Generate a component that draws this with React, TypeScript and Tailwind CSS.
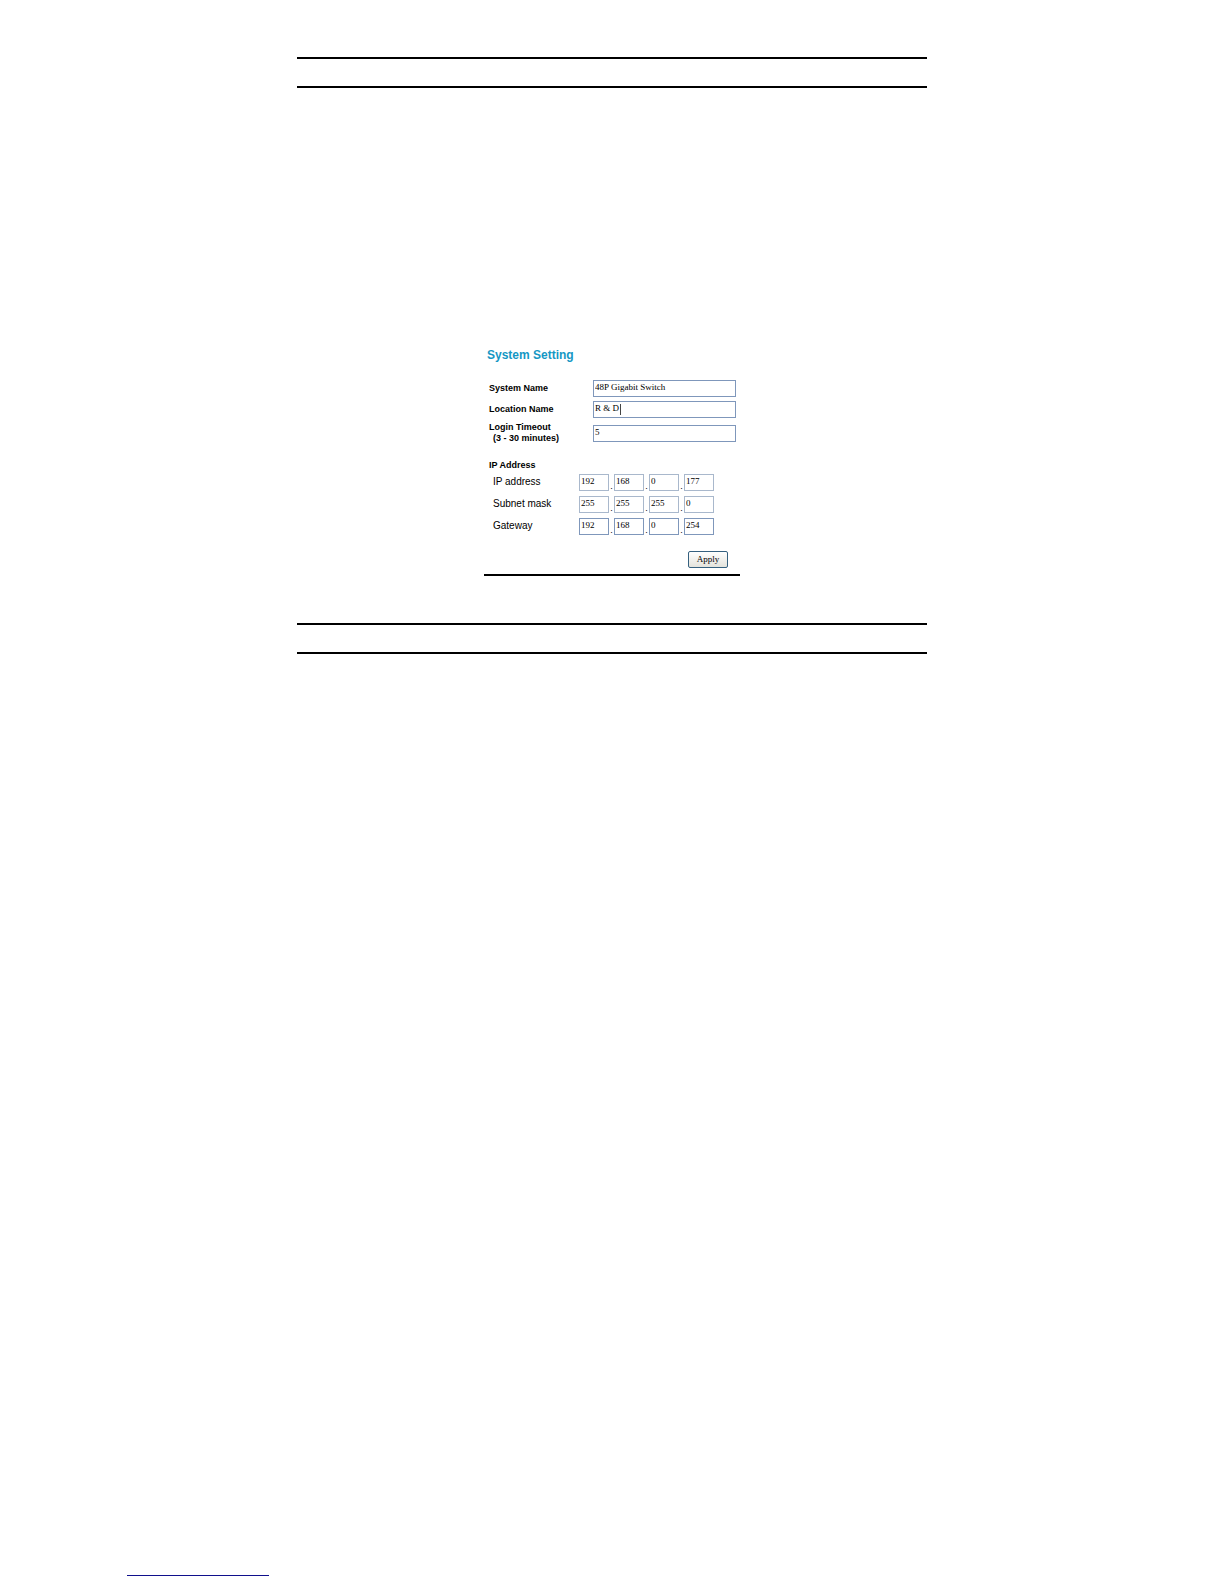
import type { ReactNode } from "react";

const addresses = [
  { label: "IP address", octets: ["192", "168", "0", "177"], border: "border-[#a9b8cc]" },
  { label: "Subnet mask", octets: ["255", "255", "255", "0"], border: "border-[#a9b8cc]" },
  { label: "Gateway", octets: ["192", "168", "0", "254"], border: "border-[#7f97bb]" }
];

const fieldClass =
  "block h-[17px] border bg-white px-px pb-[3px] font-['Liberation_Serif',serif] text-[9px] leading-3 text-black outline-none";

function SectionRule() {
  return <div className="h-[31px] w-full border-y-2 border-black" />;
}

type FieldProps = {
  id: string;
  label: ReactNode;
  value: string;
  active?: boolean;
};

function Field({ id, label, value, active }: FieldProps) {
  return (
    <div className="flex items-center justify-between">
      <label className="text-[9px] leading-[11px] font-bold" htmlFor={id}>
        {label}
      </label>
      <div className="relative w-[143px]">
        <input className={`${fieldClass} w-full border-[#7f97bb]`} defaultValue={value} id={id} type="text" />
        {active && <span aria-hidden="true" className="absolute top-[3px] left-[27px] h-[11px] w-px bg-[#444444]" />}
      </div>
    </div>
  );
}

function SystemSetting() {
  return (
    <form className="w-64 border-b-2 border-black pb-1.5" onSubmit={(event) => event.preventDefault()}>
      <h1 className="pl-[3px] text-xs leading-4 font-bold text-[#1597c4]">System Setting</h1>

      <div className="mt-[17px] flex flex-col gap-1 pr-1 pl-[5px]">
        <Field id="system-name" label="System Name" value="48P Gigabit Switch" />
        <Field active id="location-name" label="Location Name" value="R & D" />
        <Field
          id="login-timeout"
          label={
            <>
              <span className="block">Login Timeout</span>
              <span className="block pl-1">(3 - 30 minutes)</span>
            </>
          }
          value="5"
        />
      </div>

      <h2 className="mt-[15px] pl-[5px] text-[9px] leading-3 font-bold">IP Address</h2>

      <div className="mt-[3px] flex flex-col gap-[5px]">
        {addresses.map(({ label, octets, border }) => (
          <div aria-label={label} className="flex pl-[9px]" key={label} role="group">
            <label className="w-[86px] text-[10px] leading-4" htmlFor={`${label}-0`}>
              {label}
            </label>
            {octets.map((octet, index) => (
              <div className="flex items-end" key={index}>
                {index > 0 && <span className="w-[5px] text-center text-[9px] leading-[9px]">.</span>}
                <input
                  aria-label={`${label} ${index + 1}`}
                  className={`${fieldClass} ${border} w-[30px]`}
                  defaultValue={octet}
                  id={`${label}-${index}`}
                  type="text"
                />
              </div>
            ))}
          </div>
        ))}
      </div>

      <div className="mt-4 flex justify-end pr-3">
        <button
          className="h-[17px] w-10 rounded-xs border border-[#35607f] bg-linear-to-b from-white to-[#e4e3dc] pb-0.5 font-['Liberation_Serif',serif] text-[9px] leading-3 text-black"
          type="submit"
        >
          Apply
        </button>
      </div>
    </form>
  );
}

export default function App() {
  return (
    <div className="flex min-h-screen flex-col bg-white font-['Liberation_Sans',Arial,sans-serif] text-black">
      <main className="mx-auto flex w-full max-w-[630px] flex-col items-center pt-[57px]">
        <SectionRule />
        <div className="pt-[259px] pb-[47px]">
          <SystemSetting />
        </div>
        <SectionRule />
      </main>
      <footer className="mt-auto pb-2 pl-[127px]">
        <a aria-label="Back to top" className="block h-3 w-[142px] border-b border-[#10108c]" href="#top" />
      </footer>
    </div>
  );
}
